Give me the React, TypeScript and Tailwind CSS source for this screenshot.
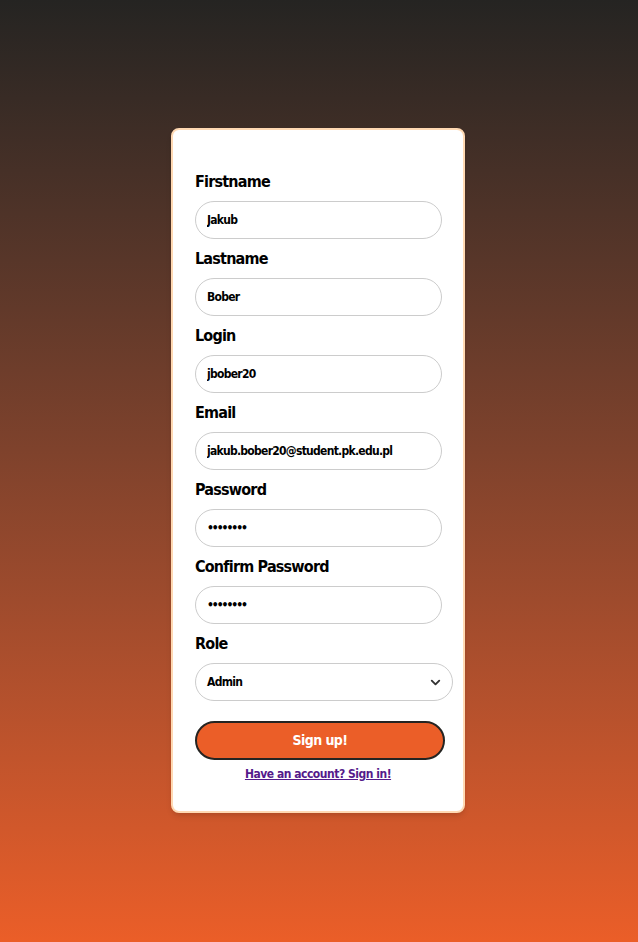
import { ChevronDown } from "lucide-react";

const font = { fontFamily: '"Liberation Sans Narrow", "DejaVu Sans Condensed", "Liberation Sans", sans-serif' };

interface FieldProps {
  label: string;
  value: string;
  type?: string;
}

function Field({ label, value, type = "text" }: FieldProps) {
  const secret = type === "password";
  return (
    <div className="flex flex-col">
      <label className="h-6 text-[16px] leading-6 font-bold tracking-[-0.05em] text-black">{label}</label>
      <input
        type={type}
        defaultValue={value}
        readOnly
        className={
          secret
            ? "mt-[7px] mb-2 h-[38px] w-[247px] rounded-full border border-[#cccccc] bg-white px-[11px] text-[12px] font-bold tracking-[-0.17em] text-black outline-none"
            : "mt-[7px] mb-2 h-[38px] w-[247px] rounded-full border border-[#cccccc] bg-white px-[11px] text-[12px] font-bold tracking-[-0.06em] text-black outline-none"
        }
      />
    </div>
  );
}

export default function App() {
  return (
    <div
      className="flex h-[942px] w-full items-start justify-center bg-linear-to-b from-[#252422] to-[#eb5e28] pt-[128px] pr-[2px]"
      style={font}
    >
      <div className="w-[294px] rounded-lg border-2 border-[#ffd9b3] bg-white px-[22px] pt-[40px] pb-[28px] shadow-md">
        <form className="flex flex-col">
          <Field label="Firstname" value="Jakub" />
          <Field label="Lastname" value="Bober" />
          <Field label="Login" value="jbober20" />
          <Field label="Email" value="jakub.bober20@student.pk.edu.pl" />
          <Field label="Password" value="12345678" type="password" />
          <Field label="Confirm Password" value="12345678" type="password" />
          <div className="flex flex-col">
            <label className="h-6 text-[16px] leading-6 font-bold tracking-[-0.05em] text-black">Role</label>
            <div className="mt-[7px] flex h-[38px] w-[258px] items-center justify-between rounded-full border border-[#cccccc] bg-white pr-[9px] pl-[11px] text-[12px] font-bold tracking-[-0.06em] text-black">
              <span>Admin</span>
              <ChevronDown size={15} strokeWidth={3} className="text-[#333]" />
            </div>
          </div>
          <button
            type="button"
            className="mt-5 h-[39px] w-[250px] rounded-full border-2 border-[#252422] bg-[#eb5e28] text-[14px] font-bold tracking-[-0.04em] text-white"
          >
            Sign up!
          </button>
          <a href="#" className="mt-[5px] text-center text-[12px] font-bold tracking-[-0.04em] text-[#551a8b] underline">
            Have an account? Sign in!
          </a>
        </form>
      </div>
    </div>
  );
}
